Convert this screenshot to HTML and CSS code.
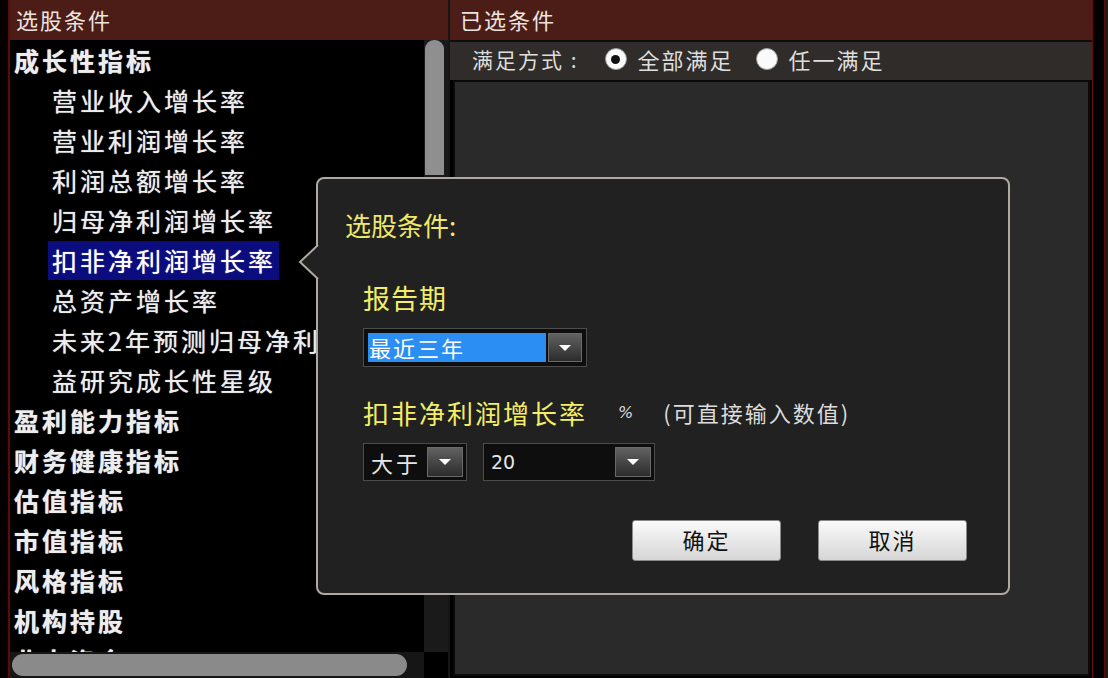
FILE: index.html
```html
<!DOCTYPE html>
<html lang="zh-CN">
<head>
<meta charset="utf-8">
<title>选股条件</title>
<link rel="stylesheet" href="styles.css">
</head>
<body>
<div class="app">
  <div class="edge-left"></div>
  <section class="left">
    <div class="hdr hdr-left">选股条件</div>
    <div class="tree-wrap">
      <ul class="tree">
        <li class="cat">成长性指标</li>
        <li class="sub">营业收入增长率</li>
        <li class="sub">营业利润增长率</li>
        <li class="sub">利润总额增长率</li>
        <li class="sub">归母净利润增长率</li>
        <li class="sub"><span class="sel">扣非净利润增长率</span></li>
        <li class="sub">总资产增长率</li>
        <li class="sub">未来2年预测归母净利润增长率</li>
        <li class="sub">益研究成长性星级</li>
        <li class="cat">盈利能力指标</li>
        <li class="cat">财务健康指标</li>
        <li class="cat">估值指标</li>
        <li class="cat">市值指标</li>
        <li class="cat">风格指标</li>
        <li class="cat">机构持股</li>
        <li class="cat">北上资金</li>
      </ul>
      <div class="vscroll"><div class="vthumb"></div></div>
      <div class="hscroll"><div class="hthumb"></div></div>
      <div class="corner"></div>
    </div>
  </section>
  <section class="right">
    <div class="hdr hdr-right">已选条件</div>
    <div class="mode">
      <span class="mode-label">满足方式 :</span>
      <span class="radio on"></span><span class="radio-text">全部满足</span>
      <span class="radio"></span><span class="radio-text">任一满足</span>
    </div>
    <div class="box"></div>
  </section>
  <div class="edge-right"></div>

  <div class="popup">
    <svg class="arrow" width="22" height="36" viewBox="0 0 22 36">
      <polygon points="22,0 20,0 2,17 20,34 22,34" fill="#212121"/>
      <polyline points="20,0 2,17 20,34" fill="none" stroke="#aeaaa2" stroke-width="2"/>
    </svg>
    <div class="ptitle">选股条件:</div>
    <div class="form">
      <div class="label">报告期</div>
      <div class="select select-period">
        <div class="field field-blue">最近三年</div>
        <div class="dd"><span class="tri"></span></div>
      </div>
      <div class="label2-row">
        <span class="label2">扣非净利润增长率</span>
        <span class="pct">%</span>
        <span class="hint">(可直接输入数值)</span>
      </div>
      <div class="cond-row">
        <div class="select select-op">
          <div class="field">大于</div>
          <div class="dd"><span class="tri"></span></div>
        </div>
        <div class="select select-val">
          <div class="field field-num">20</div>
          <div class="dd"><span class="tri"></span></div>
        </div>
      </div>
    </div>
    <div class="btns">
      <button class="btn">确定</button>
      <button class="btn">取消</button>
    </div>
  </div>
</div>
</body>
</html>
```
FILE: styles.css
```css
* { box-sizing: border-box; margin: 0; padding: 0; }
body {
  margin: 0;
  background: #000;
  font-family: "Noto Sans CJK SC", "Noto Sans", sans-serif;
}
.app {
  position: relative;
  width: 1108px;
  height: 678px;
  display: flex;
  overflow: hidden;
  background: #000;
}
.edge-left {
  width: 10px;
  background: #050101;
  border-right: 2px solid #5a0c0c;
}
.left {
  width: 440px;
  display: flex;
  flex-direction: column;
  border-right: 2px solid #161616;
}
.hdr {
  height: 40px;
  background: #4b1d16;
  color: #ece4e0;
  font-size: 22px;
  letter-spacing: 2px;
  line-height: 38px;
}
.hdr-left { padding-left: 6px; }
.hdr-right { padding-left: 10px; }

.tree-wrap {
  flex: 1;
  min-height: 0;
  display: grid;
  grid-template-columns: 1fr 24px;
  grid-template-rows: 1fr 26px;
}
.tree {
  list-style: none;
  overflow: hidden;
  padding-left: 4px;
  background: #000;
}
.tree li {
  height: 40px;
  line-height: 40px;
  font-size: 25px;
  letter-spacing: 3px;
  color: #ededed;
  white-space: nowrap;
  text-shadow: 0 0 1px #c8d0e0;
}
.tree .cat { font-weight: bold; }
.tree .sub { padding-left: 38px; }
.sel {
  display: inline-block;
  height: 39px;
  line-height: 39px;
  margin-left: -4px;
  padding: 0 3px 0 4px;
  background: #0b0c7e;
  color: #fff;
}
.vscroll { background: #1a1a1a; }
.vthumb {
  margin-left: 1px;
  width: 19px;
  height: 135px;
  background: #8f8f8f;
  border-radius: 9px 9px 0 0;
}
.hscroll { background: #161616; padding: 2px 0 2px 2px; }
.hthumb {
  width: 395px;
  height: 22px;
  background: #8a8a8a;
  border-radius: 11px;
}
.corner { background: #000; }

.right {
  width: 642px;
  display: flex;
  flex-direction: column;
}
.mode {
  height: 40px;
  background: #302c29;
  border-top: 2px solid #0d0d0d;
  display: flex;
  align-items: center;
  padding: 0 0 4px 22px;
  color: #dedede;
  font-size: 21px;
  letter-spacing: 2px;
}
.mode-label { margin-right: 26px; }
.radio {
  width: 22px;
  height: 22px;
  border-radius: 50%;
  background: #fafafa;
  border: 1px solid #9a9a9a;
  display: inline-flex;
  align-items: center;
  justify-content: center;
  margin-right: 11px;
}
.radio.on::after {
  content: "";
  width: 9px;
  height: 9px;
  border-radius: 50%;
  background: #111;
}
.radio-text { margin-right: 22px; font-size: 22px; }
.box {
  flex: 1;
  background: #2a2a2a;
  border: 2px solid #0a0a0a;
  margin: 0 2px 2px 3px;
}
.edge-right {
  width: 16px;
  background: linear-gradient(to right, #6a0d0d 0 1px, #000 1px 12px, #5a0a0a 12px 13px, #1c1c1c 13px);
}

.popup {
  position: absolute;
  left: 316px;
  top: 177px;
  width: 694px;
  height: 418px;
  background: #212121;
  border: 2px solid #aeaaa2;
  border-radius: 8px;
}
.arrow {
  position: absolute;
  left: -20px;
  top: 66px;
}
.ptitle {
  margin: 30px 0 0 27px;
  font-size: 26px;
  line-height: 32px;
  color: #efe86c;
}
.form { margin-left: 45px; }
.label {
  margin-top: 41px;
  font-size: 27px;
  line-height: 32px;
  letter-spacing: 1px;
  color: #f4ee66;
}
.select {
  display: flex;
  background: #0e0e0e;
  border: 1px solid #4c4c4c;
  padding: 3px;
  gap: 2px;
}
.select-period {
  margin-top: 14px;
  width: 224px;
  height: 39px;
  padding: 4px;
}
.field {
  flex: 1;
  color: #e6e6e6;
  font-size: 22px;
  letter-spacing: 3px;
  line-height: 30px;
  padding-left: 4px;
}
.field-blue {
  background: #2b8ef2;
  color: #fff;
  letter-spacing: 2px;
  line-height: 29px;
  padding-left: 1px;
}
.field-num {
  font-family: "DejaVu Sans", sans-serif;
  font-size: 19px;
  letter-spacing: 0;
}
.dd {
  width: 34px;
  background: linear-gradient(#616161, #2c2c2c);
  border: 1px solid #6a6a6a;
  display: flex;
  align-items: center;
  justify-content: center;
}
.tri {
  width: 0;
  height: 0;
  border-left: 6px solid transparent;
  border-right: 6px solid transparent;
  border-top: 6px solid #fff;
}
.label2-row {
  margin-top: 29px;
  display: flex;
  align-items: center;
  height: 32px;
}
.label2 {
  font-size: 26px;
  letter-spacing: 2px;
  color: #f4ee66;
}
.pct {
  margin-left: 31px;
  font-family: "DejaVu Sans", sans-serif;
  font-size: 16px;
  font-style: italic;
  color: #d8d8d8;
}
.hint {
  margin-left: 30px;
  font-size: 22px;
  letter-spacing: 2px;
  color: #dcdcdc;
}
.cond-row {
  margin-top: 15px;
  display: flex;
  gap: 16px;
}
.select-op { width: 104px; height: 38px; }
.select-val { width: 172px; height: 38px; }
.select-op .dd, .select-val .dd { width: 36px; }
.btns {
  margin-top: 39px;
  display: flex;
  justify-content: flex-end;
  gap: 37px;
  padding-right: 41px;
}
.btn {
  width: 149px;
  height: 41px;
  background: linear-gradient(#fafafa, #d6d6d6);
  border: 1px solid #8a8a8a;
  border-radius: 3px;
  font-family: "Noto Sans CJK SC", sans-serif;
  font-size: 22px;
  letter-spacing: 2px;
  color: #111;
  padding-bottom: 3px;
}
```
